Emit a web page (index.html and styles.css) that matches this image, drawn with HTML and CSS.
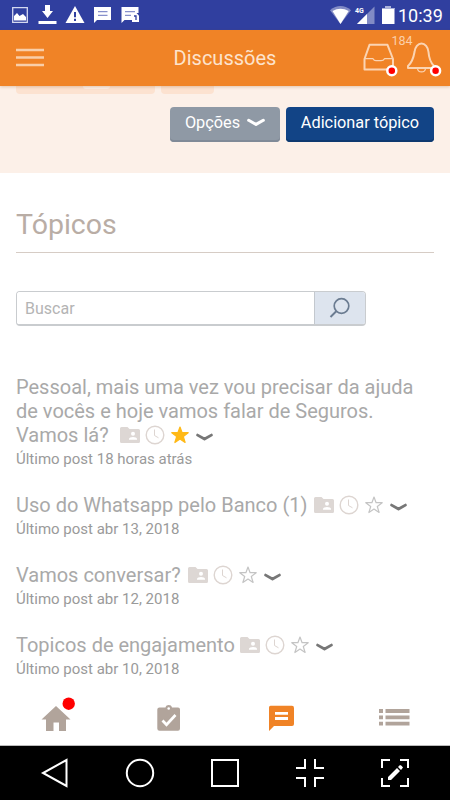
FILE: index.html
```html
<!DOCTYPE html>
<html lang="pt-BR">
<head>
    <meta charset="UTF-8">
    <meta name="viewport" content="width=device-width, initial-scale=1.0">
    <title>Discussões</title>
    <link rel="stylesheet" href="styles.css">
</head>
<body>
    <!-- shared icons -->
    <svg class="sprite">
        <symbol id="folder" viewBox="0 0 20 16">
            <path fill="#ddd7d4" d="M1.500 0H7.500L9.500 2H18.500Q20 2 20 3.500V14.500Q20 16 18.500 16H1.500Q0 16 0 14.500V1.500Q0 0 1.500 0Z"/>
            <circle cx="13" cy="6.800" r="2" fill="#fff"/>
            <path fill="#fff" d="M9 12.800V11.800Q9.500 10 13 10T17 11.800V12.800Z"/>
        </symbol>
        <symbol id="clock" viewBox="0 0 20 20">
            <circle cx="10" cy="10" r="8.800" fill="none" stroke="#ddd5d1" stroke-width="1.400"/>
            <path d="M9.500 4.500V10.500L13.500 12.800" fill="none" stroke="#ddd5d1" stroke-width="1"/>
        </symbol>
        <symbol id="star" viewBox="0 0 18 18">
            <path d="M9 1L11.100 6.700H17.200L12.300 10.500L14.100 16.500L9 13L3.900 16.500L5.700 10.500L.8 6.700H6.900Z" stroke-width="1.200" stroke-linejoin="round"/>
        </symbol>
        <symbol id="chevron" viewBox="0 0 16 8">
            <path d="M1.500 2L8 5.700L14.500 2" fill="none" stroke="currentColor" stroke-width="2.700" stroke-linecap="round" stroke-linejoin="round"/>
        </symbol>
    </svg>

    <div class="status-bar">
        <svg width="142" height="30" viewBox="0 0 142 30" fill="#fff">
            <path d="M12.700 7.700H27.300V22.300H12.700Z" fill="none" stroke="#d4d8f0" stroke-width="1.300"/>
            <path d="M14 20.500V16L17 13L19.500 16L23 14L26 17V20.500Z"/>
            <path d="M45 5H50V11H53L47.500 18L42 11H45ZM38.500 21H56.500V24H38.500Z"/>
            <path d="M75 6L84.500 23H65.500Z"/>
            <path d="M74 12H76V17.300H74ZM74 18.800H76V21H74Z" fill="#303f9f"/>
            <path d="M94 7H111V20H97L94 23Z"/>
            <path d="M98 11.700H107.500M98 15.300H107.500" stroke="#8790cb" stroke-width="1.200"/>
            <path d="M121.500 7H138.500V13H132V20H124.500L121.500 23Z"/>
            <path d="M125 11.700H135M125 15.300H131" stroke="#8790cb" stroke-width="1.200"/>
            <path d="M132 13H136.500L139 15.500V22H132Z"/>
            <path d="M134 16H136V20" fill="none" stroke="#303f9f" stroke-width="1.300"/>
        </svg>
        <div class="status-right">
            <svg width="68" height="30" viewBox="330 0 68 30" fill="#fff">
                <path d="M330 10.200Q340.500 2 351 10.200L340.500 24Z" opacity=".4"/>
                <path d="M332.500 11Q340.500 6.500 348.700 11L340.500 24Z"/>
                <path d="M374.500 6.500V24H357Z" opacity=".4"/>
                <path d="M367 14V24H357Z"/>
                <text class="network" x="355" y="12.500">4G</text>
                <path d="M385 6H391V8H394.500V24H382V8H385Z"/>
                <path d="M385 6H391V8H394.500V9H382V8H385Z" fill="#aab1da"/>
            </svg>
            <span class="time">10:39</span>
        </div>
    </div>

    <header class="header">
        <svg class="menu" width="28" height="20" viewBox="0 0 28 20" fill="none" stroke="#f9cea8" stroke-width="2.500">
            <path d="M0 2H28M0 9.500H28M0 17H28"/>
        </svg>
        <h1>Discussões</h1>
        <svg class="alerts" width="90" height="50" viewBox="360 33 90 50">
            <g fill="none" stroke="#fbd4b2" stroke-width="2" stroke-linejoin="round">
                <path d="M369.500 44.800H387.500L393 59V69.500H364.500V59Z"/>
                <path d="M364.500 58.700H373Q374 60.700 376 60.700H381Q383.500 60.700 384.500 58.700H393" stroke-width="1.300"/>
                <path d="M421.500 43.500C425 43.500 428 47 428.500 52C429 59 431 63 434 66V68H408V66C412.500 62 413.500 58 414.500 52C415 47 418 43.500 421.500 43.500Z"/>
                <path d="M417.500 68.500C418 73 425 73 425.500 68.500" stroke-width="1.200"/>
            </g>
            <g fill="#f00" stroke="#fff" stroke-width="2.500">
                <circle cx="391.800" cy="70.700" r="4.500"/>
                <circle cx="435.600" cy="70.700" r="4.500"/>
            </g>
            <text class="count" x="391.500" y="45">184</text>
        </svg>
    </header>

    <main>
        <section class="banner">
            <div class="crumbs">
                <span class="crumb crumb-long"><i></i></span>
                <span class="crumb"></span>
            </div>
            <div class="actions">
                <button class="btn btn-options">Opções <svg width="18" height="9"><use href="#chevron"/></svg></button>
                <button class="btn btn-add">Adicionar tópico</button>
            </div>
        </section>

        <section class="topics">
            <h2>Tópicos</h2>
            <form class="search">
                <input type="text" placeholder="Buscar">
                <button type="button" aria-label="Buscar">
                    <svg width="22" height="22" viewBox="0 0 22 22" fill="none" stroke="#6b7c91" stroke-width="1.700">
                        <circle cx="12.500" cy="9" r="7.300"/>
                        <path d="M7.500 14L1.500 20" stroke-width="2"/>
                    </svg>
                </button>
            </form>

            <article class="topic">
                <h3>Pessoal, mais uma vez vou precisar da ajuda<br>de vocês e hoje vamos falar de Seguros.<br>Vamos lá? <span class="icons icons-first"><svg class="folder"><use href="#folder"/></svg><svg class="clock"><use href="#clock"/></svg><svg class="star starred"><use href="#star"/></svg><svg class="chevron"><use href="#chevron"/></svg></span></h3>
                <p>Último post 18 horas atrás</p>
            </article>
            <article class="topic">
                <h3>Uso do Whatsapp pelo Banco (1) <span class="icons"><svg class="folder"><use href="#folder"/></svg><svg class="clock"><use href="#clock"/></svg><svg class="star"><use href="#star"/></svg><svg class="chevron"><use href="#chevron"/></svg></span></h3>
                <p>Último post abr 13, 2018</p>
            </article>
            <article class="topic">
                <h3>Vamos conversar? <span class="icons"><svg class="folder"><use href="#folder"/></svg><svg class="clock"><use href="#clock"/></svg><svg class="star"><use href="#star"/></svg><svg class="chevron"><use href="#chevron"/></svg></span></h3>
                <p>Último post abr 12, 2018</p>
            </article>
            <article class="topic">
                <h3>Topicos de engajamento <span class="icons icons-last"><svg class="folder"><use href="#folder"/></svg><svg class="clock"><use href="#clock"/></svg><svg class="star"><use href="#star"/></svg><svg class="chevron"><use href="#chevron"/></svg></span></h3>
                <p>Último post abr 10, 2018</p>
            </article>
        </section>
    </main>

    <nav class="tabs">
        <a><svg width="36" height="40" viewBox="0 0 36 40">
            <path d="M18 15L32.500 28.500H28V40H21V31.500H15.500V40H8V28.500H3.500Z" fill="#b1a49b"/>
            <circle cx="30.700" cy="12.700" r="6.200" fill="#f00"/>
        </svg></a>
        <a><svg width="36" height="40" viewBox="0 0 36 40">
            <path d="M8.500 16.500H14.500C15 13.200 20.500 13.200 21 16.500H27Q29 16.500 29 18.500V37.500Q29 39.800 27 39.800H8.500Q6.300 39.800 6.300 37.500V18.500Q6.300 16.500 8.500 16.500Z" fill="#b1a49b"/>
            <circle cx="17.700" cy="17.500" r="1.300" fill="#fff"/>
            <path d="M11.500 29.500L15.500 33.700L24.500 24" fill="none" stroke="#fff" stroke-width="2.700"/>
        </svg></a>
        <a><svg width="36" height="40" viewBox="0 0 36 40">
            <path d="M7.500 14.800H29Q31 14.800 31 17V33Q31 35 29 35H11L6 40V16.500Q6 14.800 7.500 14.800Z" fill="#f08326"/>
            <path d="M12 22.300H25M12 27.500H25" stroke="#fff" stroke-width="2.800"/>
        </svg></a>
        <a><svg width="36" height="40" viewBox="0 0 36 40">
            <path d="M3 20H7M9.500 20H33.500M3 26.300H7M9.500 26.300H33.500M3 32.700H7M9.500 32.700H33.500" stroke="#b1a49b" stroke-width="3.800"/>
        </svg></a>
    </nav>

    <div class="system-nav">
        <svg width="32" height="32" viewBox="0 0 32 32"><path d="M27.500 3V29L4 16Z"/></svg>
        <svg width="32" height="32" viewBox="0 0 32 32"><circle cx="16" cy="16" r="13.200"/></svg>
        <svg width="32" height="32" viewBox="0 0 32 32"><path d="M3 3H29V29H3Z"/></svg>
        <svg width="32" height="32" viewBox="0 0 32 32"><path d="M11 2V11H2M21 2V11H30M11 30V21H2M21 30V21H30"/></svg>
        <svg width="32" height="32" viewBox="0 0 32 32">
            <path d="M11 3H3V11M21 3H29V11M3 21V29H11M29 21V29H21"/>
            <path class="pen" d="M9 20L18 11L21 14L12 23H9ZM19 10L21 8Q22.500 8 24 10.500L22 13Z"/>
        </svg>
    </div>
</body>
</html>
```
FILE: styles.css
```css
* {
    box-sizing: border-box;
}

body {
    margin: 0;
    width: 450px;
    height: 800px;
    display: flex;
    flex-direction: column;
    overflow: hidden;
    background-color: #fff;
    font-family: Roboto, "Liberation Sans", sans-serif;
}

svg {
    display: block;
}

.sprite {
    position: absolute;
    width: 0;
    height: 0;
}

h1, h2, h3, p {
    margin: 0;
    font-weight: 400;
}

/* Android status bar */
.status-bar {
    display: flex;
    justify-content: space-between;
    flex: 0 0 30px;
    background-color: #303f9f;
}

.status-right {
    display: flex;
    height: 30px;
    padding-right: 7px;
}

.network {
    font-size: 7px;
    font-weight: 700;
}

.time {
    width: 45px;
    height: 30px;
    padding-top: 1px;
    color: #fff;
    font-size: 18px;
    line-height: 30px;
    white-space: nowrap;
}

/* app header */
.header {
    flex: 0 0 56px;
    display: grid;
    grid-template-columns: 90px 1fr 90px;
    align-items: center;
    background-color: #f08326;
    box-shadow: 0 1px 3px rgba(150, 70, 0, 0.25);
    z-index: 1;
}

.menu {
    margin-left: 16px;
}

.header h1 {
    color: #fde3cd;
    font-size: 20px;
    text-align: center;
}

.count {
    fill: #fbd0aa;
    font-size: 12.5px;
}

main {
    flex: 1;
    min-height: 0;
    overflow: hidden;
}

.banner {
    height: 87px;
    background-color: #fcf0e8;
}

.crumbs {
    display: flex;
    gap: 6px;
    padding-left: 16px;
    height: 21px;
}

.crumb {
    width: 53px;
    height: 8px;
    background-color: #fce2d0;
    border-radius: 0 0 4px 4px;
}

.crumb-long {
    width: 139px;
    padding-left: 67px;
}

.crumb i {
    display: block;
    width: 27px;
    height: 3px;
    background-color: #fcf0e8;
    border-radius: 0 0 4px 4px;
}

.actions {
    display: flex;
    justify-content: flex-end;
    gap: 6px;
    padding-right: 16px;
}

.btn {
    display: flex;
    align-items: center;
    justify-content: center;
    gap: 7px;
    height: 35px;
    padding: 0 0 4px;
    border: 0;
    border-radius: 4px;
    color: #fff;
    font: 16.3px Roboto, "Liberation Sans", sans-serif;
    white-space: nowrap;
}

.btn-options {
    width: 110px;
    background-color: #8f99a5;
    box-shadow: inset 0 -2px #808a97;
}

.btn-add {
    width: 148px;
    background-color: #124486;
    box-shadow: inset 0 -2px #0e396f;
}

/* topics */
.topics {
    padding: 33px 16px 0;
}

.topics h2 {
    height: 47px;
    color: #b9ada5;
    font-size: 28.5px;
    line-height: 38px;
    border-bottom: 1px solid #d6ccc5;
}

.search {
    display: flex;
    width: 350px;
    height: 35px;
    margin: 38px 0 49px;
    border: 1px solid #c9cccf;
    border-bottom-width: 2px;
    border-radius: 4px;
    overflow: hidden;
}

.search input {
    flex: 1;
    min-width: 0;
    border: 0;
    padding: 0 8px;
    font: 16px Roboto, "Liberation Sans", sans-serif;
}

.search input::placeholder {
    color: #b4b4b4;
}

.search button {
    width: 51px;
    padding: 0 0 0 14px;
    border: 0;
    border-left: 1px solid #c3c8ce;
    background-color: #dde4ee;
}

.topic {
    margin-bottom: 22px;
}

.topic h3 {
    color: #a9a9a9;
    font-size: 20px;
    line-height: 24px;
    white-space: nowrap;
}

.topic p {
    color: #9a9a9a;
    font-size: 15px;
    line-height: 24px;
}

.icons {
    display: inline-flex;
    align-items: center;
    height: 20px;
    margin-left: 2px;
    vertical-align: -3px;
    transform: translateY(-2px);
}

.icons-first {
    margin-left: 6px;
}

.icons-last {
    margin-left: 0;
}

.folder {
    width: 20px;
    height: 16px;
}

.clock {
    width: 20px;
    height: 20px;
    margin-left: 5px;
}

.star {
    width: 18px;
    height: 18px;
    margin-left: 6px;
    fill: none;
    stroke: #c4c4c4;
}

.starred {
    fill: #ffb917;
    stroke: #ffb917;
}

.chevron {
    width: 17px;
    height: 8.5px;
    margin: 4px 0 0 7px;
    color: #777;
}

/* app tabs */
.tabs {
    display: flex;
    flex: 0 0 56px;
    background-color: #fff;
    border-bottom: 1px solid #bbb;
}

.tabs a {
    flex: 1;
    display: flex;
    justify-content: center;
    padding-top: 1px;
}

.tabs svg {
    overflow: visible;
}

/* Android navigation */
.system-nav {
    display: flex;
    justify-content: space-between;
    align-items: center;
    flex: 0 0 54px;
    padding: 0 39px;
    background-color: #000;
}

.system-nav svg {
    fill: none;
    stroke: #fff;
    stroke-width: 2;
}

.system-nav .pen {
    fill: #fff;
    stroke: none;
}
```
